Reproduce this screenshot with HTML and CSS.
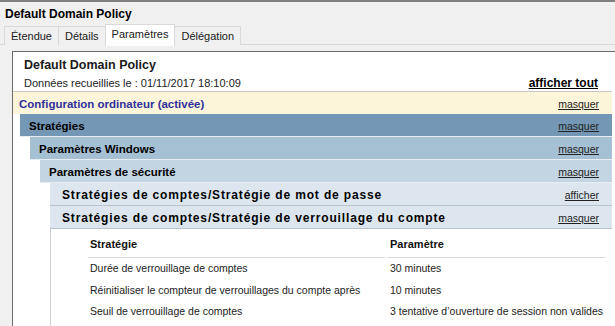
FILE: index.html
```html
<!DOCTYPE html>
<html lang="fr">
<head>
    <meta charset="UTF-8">
    <title>Default Domain Policy</title>
    <link rel="stylesheet" href="styles.css">
</head>
<body>
    <div class="window">
        <div class="title">Default Domain Policy</div>
        <!-- onglets -->
        <div class="tabs">
            <div class="tab">Étendue</div>
            <div class="tab">Détails</div>
            <div class="tab active">Paramètres</div>
            <div class="tab">Délégation</div>
        </div>

        <div class="panel">
            <div class="report-head">
                <h1>Default Domain Policy</h1>
                <div class="meta">
                    <span>Données recueillies le : 01/11/2017 18:10:09</span>
                    <a class="show-all" href="#">afficher tout</a>
                </div>
            </div>

            <div class="section">
                <div class="head level0">
                    <span class="computer">Configuration ordinateur (activée)</span>
                    <a href="#">masquer</a>
                </div>
                <div class="body first">
                    <div class="head level1"><span>Stratégies</span><a href="#">masquer</a></div>
                    <div class="body">
                        <div class="head level2"><span>Paramètres Windows</span><a href="#">masquer</a></div>
                        <div class="body">
                            <div class="head level3"><span>Paramètres de sécurité</span><a href="#">masquer</a></div>
                            <div class="body">
                                <div class="head level4"><span>Stratégies de comptes/Stratégie de mot de passe</span><a href="#">afficher</a></div>
                                <div class="head level4"><span>Stratégies de comptes/Stratégie de verrouillage du compte</span><a href="#">masquer</a></div>
                                <div class="policy-box">
                                    <div class="policy-table">
                                        <div class="th">Stratégie</div>
                                        <div class="th">Paramètre</div>
                                        <div class="td">Durée de verrouillage de comptes</div>
                                        <div class="td">30 minutes</div>
                                        <div class="td">Réinitialiser le compteur de verrouillages du compte après</div>
                                        <div class="td">10 minutes</div>
                                        <div class="td">Seuil de verrouillage de comptes</div>
                                        <div class="td">3 tentative d’ouverture de session non valides</div>
                                    </div>
                                </div>
                            </div>
                        </div>
                    </div>
                </div>
            </div>
        </div>
    </div>
</body>
</html>
```

FILE: styles.css
```css
body {
    margin: 0;
    background: #f0f0f0;
    font-family: "Liberation Sans", Arial, sans-serif;
    color: #000;
    overflow: hidden;
}
.window {
    height: 326px;
    border-top: 2px solid #7f7f7f;
    display: flex;
    flex-direction: column;
}
.title {
    font-size: 12px;
    font-weight: bold;
    line-height: 18px;
    padding: 3px 5px 2px;
}
.tabs {
    display: flex;
    height: 19px;
    padding-left: 4px;
    border-bottom: 1px solid #d9d9d9;
}
.tab {
    font-size: 11px;
    line-height: 18px;
    height: 18px;
    padding: 0 6px;
    margin-top: 1px;
    border: 1px solid #d9d9d9;
    border-bottom: none;
    margin-right: -1px;
    background: #f0f0f0;
    color: #1a1a1a;
}
.tab.active {
    background: #fff;
    height: 21px;
    margin-top: -1px;
    line-height: 19px;
    position: relative;
    z-index: 1;
}
.panel {
    flex: 1;
    margin: 6px 0 0 12px;
    border-left: 1px solid #6a6a6a;
    border-top: 1px solid #6a6a6a;
    background: #fff;
    padding-right: 3px;
}
.report-head {
    padding: 4px 14px 1px 11px;
}
.report-head h1 {
    margin: 0;
    font-size: 12.5px;
    line-height: 18px;
    color: #1a1a1a;
}
.meta {
    display: flex;
    justify-content: space-between;
    font-size: 11px;
    line-height: 14px;
    margin-top: 2px;
    color: #222;
}
.meta .show-all {
    font-size: 12px;
    font-weight: bold;
    color: #000;
}
a {
    color: #222;
}
.head {
    display: flex;
    justify-content: space-between;
    align-items: center;
    height: 20px;
    padding: 2px 13px 0 9px;
    font-size: 11.5px;
    font-weight: bold;
    border-bottom: 1px solid #e6edf3;
}
.head a {
    font-size: 10.5px;
    font-weight: normal;
    letter-spacing: 0;
}
.level0 {
    background: #fcf5d9;
    border-top: 1px solid #c6c6c6;
    border-bottom: none;
    padding-left: 6px;
}
.computer {
    color: #30309c;
}
.level1 {
    background: #7397b4;
}
.level2 {
    background: #a5bfd3;
}
.level3 {
    background: #c3d5e3;
}
.level4 {
    background: #dde6ee;
    padding-left: 12px;
    border-bottom: 1px solid #b9c3cc;
    font-size: 12px;
    letter-spacing: 0.85px;
}
.body {
    padding-left: 10px;
}
.body.first {
    padding-left: 7px;
}
.policy-box {
    border-left: 1px solid #cfcfcf;
    padding: 6px 0 0 37px;
    height: 100px;
}
.policy-table {
    display: grid;
    grid-template-columns: 297px 217px;
    column-gap: 3px;
    font-size: 10.5px;
    color: #222;
}
.th {
    font-size: 11px;
    font-weight: bold;
    line-height: 18px;
    padding: 0 0 4px 2px;
    border-bottom: 1px solid #dadada;
    color: #111;
}
.td {
    line-height: 21.5px;
    padding-left: 2px;
    white-space: nowrap;
}
```
